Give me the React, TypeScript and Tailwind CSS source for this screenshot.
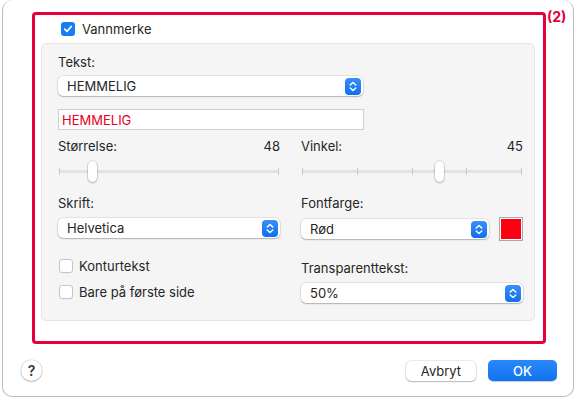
import React from "react";

const Stepper = () => (
  <svg width="16" height="17" viewBox="0 0 16 17" className="shrink-0">
    <defs>
      <linearGradient id="sg" x1="0" y1="0" x2="0" y2="1">
        <stop offset="0" stopColor="#3a8ff8" />
        <stop offset="1" stopColor="#0f6fef" />
      </linearGradient>
    </defs>
    <rect x="0" y="0" width="16" height="17" rx="4" fill="url(#sg)" />
    <path d="M5.2 7 L8 4.4 L10.8 7" fill="none" stroke="white" strokeWidth="1.4" strokeLinecap="round" strokeLinejoin="round" />
    <path d="M5.2 10 L8 12.6 L10.8 10" fill="none" stroke="white" strokeWidth="1.4" strokeLinecap="round" strokeLinejoin="round" />
  </svg>
);

const Select = ({ text, w }: { text: string; w: string }) => (
  <div
    className={`${w} h-[20px] bg-white rounded-[5px] shadow-[0_0_0_0.5px_rgba(0,0,0,0.14),0_1px_1.5px_rgba(0,0,0,0.22)] flex items-center justify-between pl-[9px] pr-[2px]`}
  >
    <span className="text-[13px] leading-4 text-[#262626]">{text}</span>
    <Stepper />
  </div>
);

const Box = ({ label }: { label: string }) => (
  <div className="flex items-center h-[16px]">
    <div className="w-[14px] h-[14px] ml-[1px] bg-white border border-[#c6c6c6] rounded-[3px] shadow-[0_0.5px_0.5px_rgba(0,0,0,0.05)]" />
    <span className="ml-[6px] text-[13px] leading-4 text-[#262626]">{label}</span>
  </div>
);

const Tick = () => <div className="w-[1px] h-[7px] bg-[#c9c9c9]" />;

const Slider = ({ ticks, thumb }: { ticks: number; thumb: string }) => (
  <div className="relative w-[222px] h-[21px] flex items-center">
    <div className="absolute left-[1px] right-[1px] top-[9px] h-[3px] bg-[#e2e2e2] rounded-full" />
    <div className="relative w-full flex justify-between px-[1px]">
      {Array.from({ length: ticks }).map((_, i) => (
        <Tick key={i} />
      ))}
    </div>
    <div
      className={`absolute top-0 ${thumb} w-[9px] h-[21px] bg-white rounded-full shadow-[0_0_0_0.5px_rgba(0,0,0,0.18),0_1px_2px_rgba(0,0,0,0.25)]`}
    />
  </div>
);

export default function App() {
  return (
    <div
      className="w-[578px] h-[400px] bg-white overflow-hidden pl-[2px]"
      style={{ fontFamily: "Inter, 'Liberation Sans', sans-serif" }}
    >
      <div className="w-[572px] h-[397px] bg-white border border-t-0 border-[#bcbcbc] rounded-[10px] flex flex-col">
        <div className="relative mt-[12px] ml-[29px] w-[514px] h-[332px] border-[3px] border-[#e4003b] rounded-[4px] flex flex-col">
          <span className="absolute left-[512px] top-[-6px] text-[14px] leading-4 font-bold text-[#e4003b]">(2)</span>
          <div className="mt-[7px] ml-[26px] h-[14px] flex items-center">
            <div className="w-[14px] h-[14px] rounded-[3px] bg-[#1a7cf5] flex items-center justify-center">
              <svg width="10" height="10" viewBox="0 0 10 10">
                <path d="M1.8 5.2 L4 7.5 L8.3 2.4" fill="none" stroke="white" strokeWidth="1.7" strokeLinecap="round" strokeLinejoin="round" />
              </svg>
            </div>
            <span className="ml-[7px] text-[13px] leading-4 text-[#262626]">Vannmerke</span>
          </div>
          <div className="mt-[7px] ml-[6px] w-[494px] h-[278px] bg-[#f5f5f5] border border-[#e5e5e5] rounded-[5px] pl-[16px] pt-[10px] flex flex-col">
            <div className="text-[13px] leading-4 text-[#262626]">Tekst:</div>
            <div className="mt-[6px]">
              <Select text="HEMMELIG" w="w-[305px]" />
            </div>
            <div className="mt-[13px] w-[306px] h-[21px] bg-white border border-[#cfcfcf] flex items-center pl-[3px]">
              <span className="text-[13px] leading-4 text-[#e8001c]">HEMMELIG</span>
            </div>
            <div className="mt-[8px] flex gap-[21px]">
              <div className="w-[222px] flex flex-col">
                <div className="flex justify-between text-[13px] leading-4 text-[#262626]">
                  <span>Størrelse:</span>
                  <span>48</span>
                </div>
                <div className="mt-[7px]">
                  <Slider ticks={2} thumb="left-[30px]" />
                </div>
                <div className="mt-[13px] text-[13px] leading-4 text-[#262626]">Skrift:</div>
                <div className="mt-[7px]">
                  <Select text="Helvetica" w="w-[222px]" />
                </div>
                <div className="mt-[20px]">
                  <Box label="Konturtekst" />
                </div>
                <div className="mt-[10px]">
                  <Box label="Bare på første side" />
                </div>
              </div>
              <div className="w-[222px] flex flex-col">
                <div className="flex justify-between text-[13px] leading-4 text-[#262626]">
                  <span>Vinkel:</span>
                  <span>45</span>
                </div>
                <div className="mt-[7px]">
                  <Slider ticks={5} thumb="left-[134px]" />
                </div>
                <div className="mt-[13px] text-[13px] leading-4 text-[#262626]">Fontfarge:</div>
                <div className="mt-[6px] flex items-center gap-[10px]">
                  <Select text="Rød" w="w-[188px]" />
                  <div className="w-[24px] h-[24px] border border-[#a9a9a9] bg-white p-[1px]">
                    <div className="w-full h-full bg-[#ff0012]" />
                  </div>
                </div>
                <div className="mt-[19px] text-[13px] leading-4 text-[#262626]">Transparenttekst:</div>
                <div className="mt-[7px]">
                  <Select text="50%" w="w-[222px]" />
                </div>
              </div>
            </div>
          </div>
        </div>
        <div className="mt-[16px] flex items-center">
          <div className="ml-[18px] w-[21px] h-[21px] rounded-full bg-white shadow-[0_0_0_0.5px_rgba(0,0,0,0.18),0_1px_1.5px_rgba(0,0,0,0.22)] flex items-center justify-center text-[14px] font-semibold text-[#3a3a3a] leading-none">
            ?
          </div>
          <div className="flex-1" />
          <div className="w-[70px] h-[20px] rounded-[5px] bg-white shadow-[0_0_0_0.5px_rgba(0,0,0,0.16),0_1px_1.5px_rgba(0,0,0,0.22)] flex items-center justify-center text-[13px] leading-4 text-[#262626]">
            Avbryt
          </div>
          <div className="ml-[12px] mr-[16px] w-[69px] h-[21px] rounded-[5px] bg-gradient-to-b from-[#2a88f8] to-[#0f73f0] shadow-[0_0.5px_1px_rgba(0,0,0,0.2)] flex items-center justify-center text-[13px] leading-4 font-medium text-white">
            OK
          </div>
        </div>
      </div>
    </div>
  );
}
